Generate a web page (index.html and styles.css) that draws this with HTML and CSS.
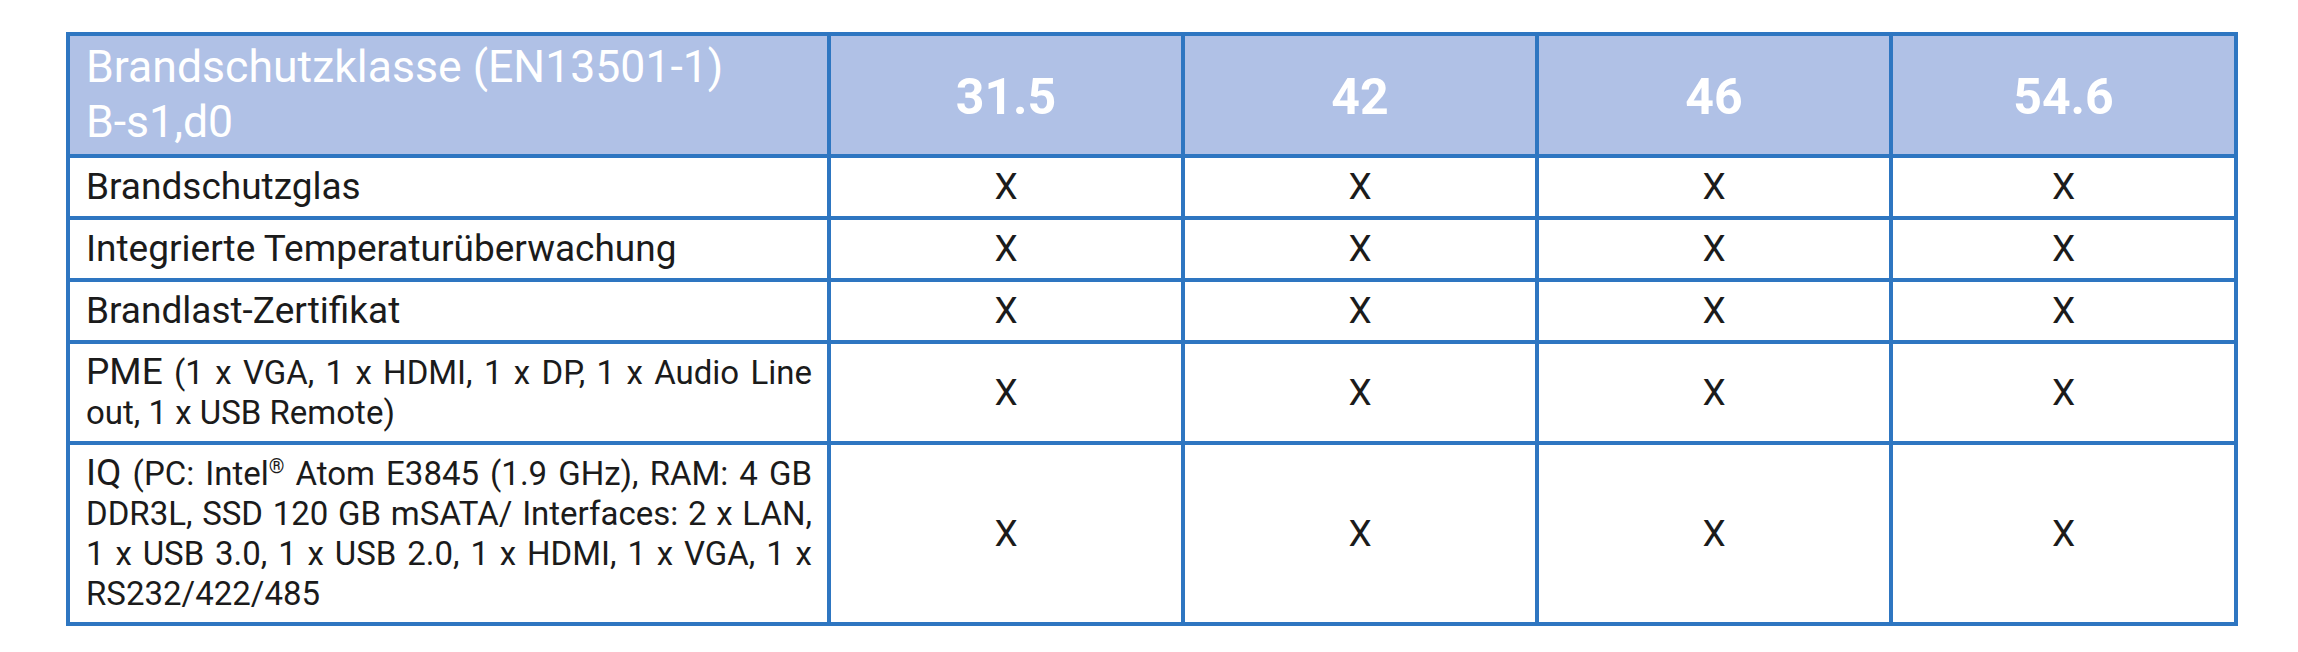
FILE: index.html
```html
<!DOCTYPE html>
<html lang="de">
<head>
<meta charset="utf-8">
<title>Brandschutzklasse</title>
<link rel="stylesheet" href="styles.css">
</head>
<body>
<table class="spec">
  <colgroup>
    <col class="c-label">
    <col class="c-val">
    <col class="c-val">
    <col class="c-val">
    <col class="c-last">
  </colgroup>
  <thead>
    <tr class="head">
      <th class="label">Brandschutzklasse (EN13501-1)<br>B-s1,d0</th>
      <th class="num">31.5</th>
      <th class="num">42</th>
      <th class="num">46</th>
      <th class="num">54.6</th>
    </tr>
  </thead>
  <tbody>
    <tr>
      <td class="label">Brandschutzglas</td>
      <td class="mark">X</td><td class="mark">X</td><td class="mark">X</td><td class="mark">X</td>
    </tr>
    <tr>
      <td class="label">Integrierte Temperaturüberwachung</td>
      <td class="mark">X</td><td class="mark">X</td><td class="mark">X</td><td class="mark">X</td>
    </tr>
    <tr>
      <td class="label">Brandlast-Zertifikat</td>
      <td class="mark">X</td><td class="mark">X</td><td class="mark">X</td><td class="mark">X</td>
    </tr>
    <tr>
      <td class="label multi"><span class="lead">PME</span> (1 x VGA, 1 x HDMI, 1 x DP, 1 x Audio Line out, 1 x USB Remote)</td>
      <td class="mark">X</td><td class="mark">X</td><td class="mark">X</td><td class="mark">X</td>
    </tr>
    <tr>
      <td class="label multi"><span class="lead">IQ</span> (PC: Intel<sup>®</sup> Atom E3845 (1.9 GHz), RAM: 4 GB DDR3L, SSD 120 GB mSATA/ Interfaces: 2 x LAN, 1 x USB 3.0, 1 x USB 2.0, 1 x HDMI, 1 x VGA, 1 x RS232/422/485</td>
      <td class="mark">X</td><td class="mark">X</td><td class="mark">X</td><td class="mark">X</td>
    </tr>
  </tbody>
</table>
</body>
</html>
```
FILE: styles.css
```css
html, body {
  margin: 0;
  padding: 0;
  background: #ffffff;
}

body {
  padding: 32px 0 0 66px;
  font-family: Roboto, "Liberation Sans", sans-serif;
  color: #1b1b1b;
}

.spec {
  border-collapse: collapse;
  table-layout: fixed;
  width: 2168px;
}

.c-label { width: 761px; }
.c-val { width: 354px; }
.c-last { width: 345px; }

.spec th,
.spec td {
  border: 4px solid #2e76c1;
}

.head th {
  background: #b0c1e6;
  color: #ffffff;
  vertical-align: middle;
}

.head .label {
  font-size: 44.6px;
  font-weight: 400;
  line-height: 55px;
  text-align: left;
  white-space: nowrap;
  padding: 4px 15px 4px 16px;
}

.head .num {
  font-size: 50px;
  font-weight: 700;
  line-height: 60px;
  text-align: center;
  padding: 4px 0 0 0;
}

.spec td {
  font-size: 37px;
  line-height: 40px;
  vertical-align: middle;
  padding: 9px 15px 9px 16px;
}

.spec td.label {
  text-align: justify;
}

.spec td.multi {
  font-size: 33px;
  padding: 8px 15px 8px 16px;
}

.lead {
  font-size: 37px;
}

.spec td.mark {
  text-align: center;
  padding: 9px 0;
}

.multi sup {
  font-size: 20px;
  line-height: 0;
  vertical-align: 12px;
}
```
